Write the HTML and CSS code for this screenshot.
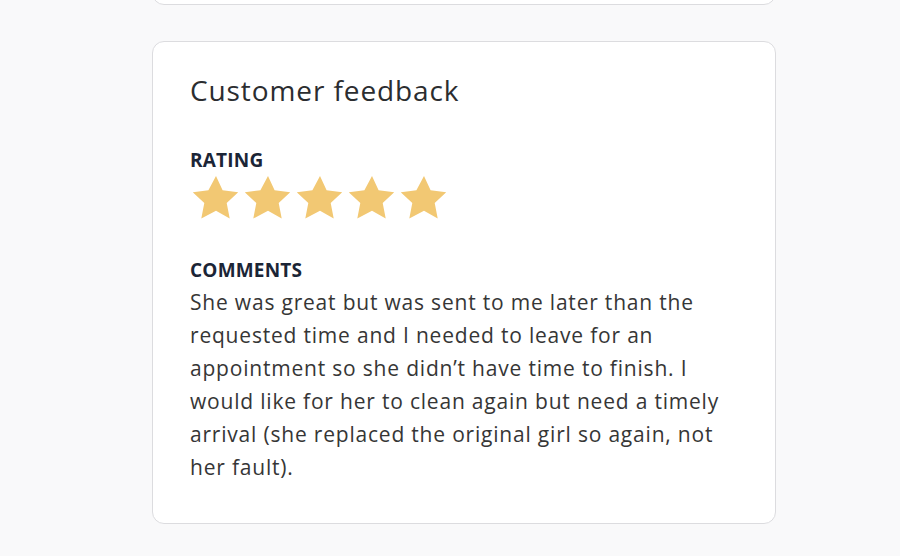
FILE: index.html
```html
<!DOCTYPE html>
<html lang="en">
<head>
    <meta charset="UTF-8">
    <meta name="viewport" content="width=device-width, initial-scale=1.0">
    <title>Customer feedback</title>
    <link rel="stylesheet" href="styles.css">
</head>
<body>
    <div class="page">
        <div class="card card-prev"></div>

        <div class="card feedback">
            <h2 class="card-title">Customer feedback</h2>

            <div class="field">
                <div class="field-label">RATING</div>
                <div class="stars">
                    <svg class="star" viewBox="0 0 46 44"><path d="M23 0l6.6 14.3 15.6 1.9-11.5 10.8 3 15.5L23 34.8 8.3 42.5l3-15.5L-.2 16.2l15.6-1.9z"/></svg>
                    <svg class="star" viewBox="0 0 46 44"><path d="M23 0l6.6 14.3 15.6 1.9-11.5 10.8 3 15.5L23 34.8 8.3 42.5l3-15.5L-.2 16.2l15.6-1.9z"/></svg>
                    <svg class="star" viewBox="0 0 46 44"><path d="M23 0l6.6 14.3 15.6 1.9-11.5 10.8 3 15.5L23 34.8 8.3 42.5l3-15.5L-.2 16.2l15.6-1.9z"/></svg>
                    <svg class="star" viewBox="0 0 46 44"><path d="M23 0l6.6 14.3 15.6 1.9-11.5 10.8 3 15.5L23 34.8 8.3 42.5l3-15.5L-.2 16.2l15.6-1.9z"/></svg>
                    <svg class="star" viewBox="0 0 46 44"><path d="M23 0l6.6 14.3 15.6 1.9-11.5 10.8 3 15.5L23 34.8 8.3 42.5l3-15.5L-.2 16.2l15.6-1.9z"/></svg>
                </div>
            </div>

            <div class="field">
                <div class="field-label">COMMENTS</div>
                <p class="comment">She was great but was sent to me later than the requested time and I needed to leave for an appointment so she didn’t have time to finish. I would like for her to clean again but need a timely arrival (she replaced the original girl so again, not her fault).</p>
            </div>
        </div>
    </div>
</body>
</html>
```

FILE: styles.css
```css
* {
    margin: 0;
    padding: 0;
    box-sizing: border-box;
}

body {
    background-color: #f9f9fa;
    font-family: "Open Sans", Lato, sans-serif;
    color: #333333;
}

.page {
    width: 624px;
    margin: 0 auto 0 152px;
    display: flex;
    flex-direction: column;
    gap: 36px;
}

.card {
    background-color: #ffffff;
    border: 1px solid #dcdcdf;
    border-radius: 12px;
}

.card-prev {
    height: 40px;
    margin-top: -35px;
}

.feedback {
    height: 483px;
    padding: 31px 36px 0 37px;
}

.card-title {
    font-size: 28px;
    font-weight: 400;
    letter-spacing: 0.9px;
    color: #2b2d30;
    line-height: 34px;
    margin-bottom: 41px;
}

.field {
    margin-bottom: 38px;
}

.field-label {
    font-size: 19px;
    font-weight: 700;
    letter-spacing: 0.2px;
    color: #1b2536;
    line-height: 24px;
    margin-bottom: 4px;
}

.stars {
    display: flex;
    gap: 6px;
    margin-top: 2px;
    margin-left: 3px;
}

.star {
    width: 46px;
    height: 44px;
    fill: #f2c873;
}

.comment {
    font-size: 21px;
    letter-spacing: 0.8px;
    line-height: 33px;
    max-width: 534px;
    margin-top: 4px;
    color: #363636;
}
```
